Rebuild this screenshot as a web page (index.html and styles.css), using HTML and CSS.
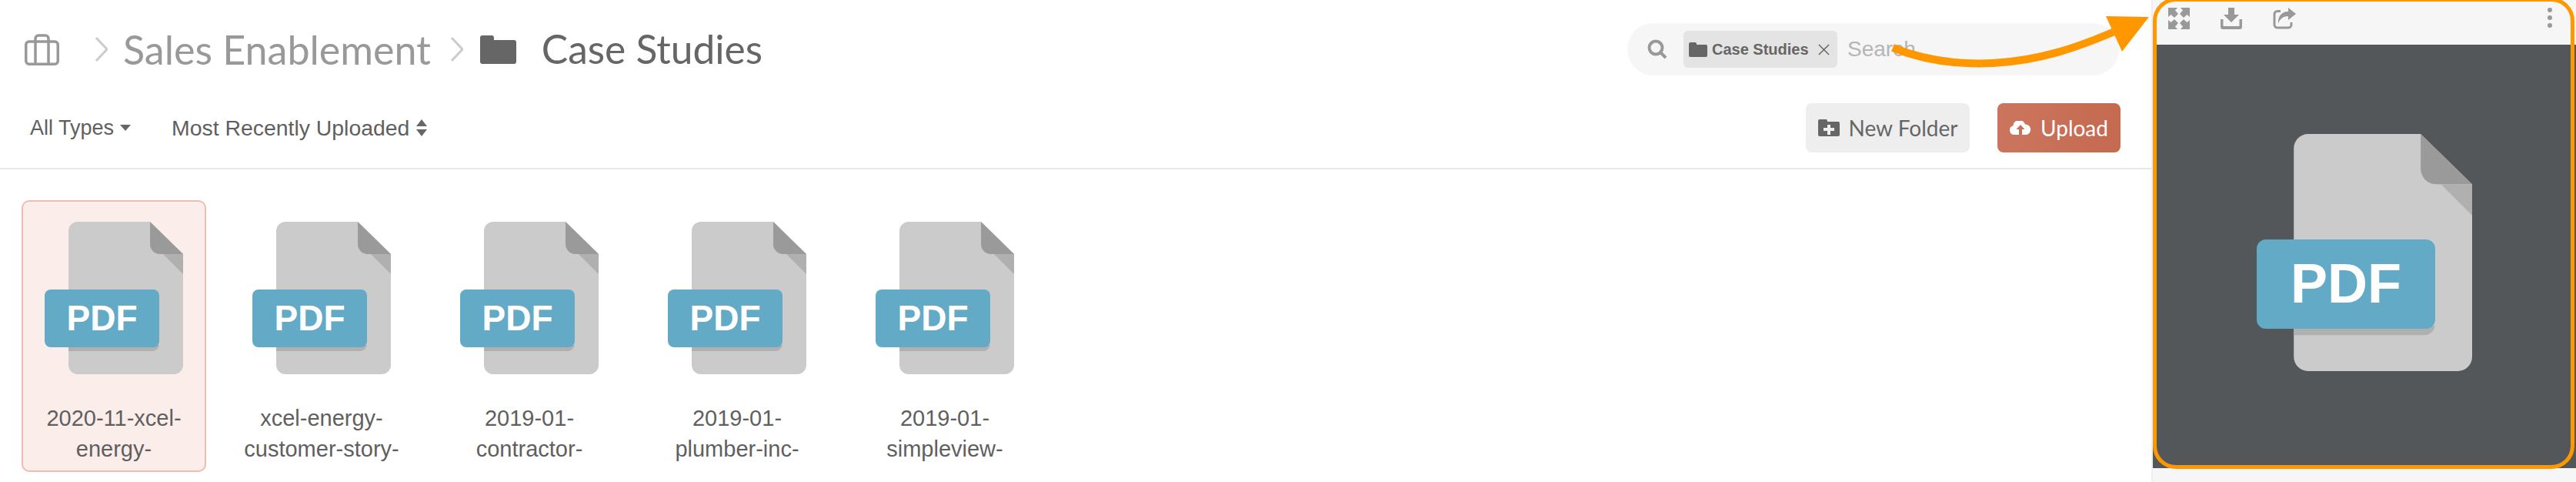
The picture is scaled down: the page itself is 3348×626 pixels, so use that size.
FILE: index.html
```html
<!DOCTYPE html>
<html lang="en">
<head>
<meta charset="utf-8">
<title>Case Studies</title>
<link rel="stylesheet" href="styles.css">
</head>
<body>
<svg class="defs" width="0" height="0" aria-hidden="true">
  <defs>
    <symbol id="pdf-file" viewBox="0 0 180 198">
      <path d="M31 12A12 12 0 0 1 43 0H137L180 42V186a12 12 0 0 1-12 12H43a12 12 0 0 1-12-12Z" fill="#cbcbcb"/>
      <path d="M137 0L180 42H150a13 13 0 0 1-13-13Z" fill="#9a9a9a"/>
      <path d="M154 42H180V68Z" fill="#b0b0b0"/>
      <path d="M31 160H149V159a9 9 0 0 1-9 9H31Z" fill="#b0b0b0"/>
    </symbol>
  </defs>
</svg>
<div class="page">
  <main class="browser">
    <header class="crumbs">
      <svg class="briefcase" viewBox="0 0 45 41" fill="none" stroke="#999" stroke-width="3.5"><rect x="1.750" y="10" width="41.500" height="29.250" rx="4"/><path d="M14 10V6a4 4 0 0 1 4-4h9a4 4 0 0 1 4 4v4M14 10V39M31 10V39"/></svg>
      <svg class="chev" viewBox="0 0 16 32" fill="none" stroke="#ccc" stroke-width="3"><path d="M1 1L15 16L1 31"/></svg>
      <span class="crumb">Sales Enablement</span>
      <svg class="chev chev-b" viewBox="0 0 16 32" fill="none" stroke="#ccc" stroke-width="3"><path d="M1 1L15 16L1 31"/></svg>
      <svg class="folder" viewBox="0 0 47 37" fill="#666"><path d="M0 3a3 3 0 0 1 3-3h12a3 3 0 0 1 3 3v3h26a3 3 0 0 1 3 3v25a3 3 0 0 1-3 3H3a3 3 0 0 1-3-3Z"/></svg>
      <span class="crumb crumb-now">Case Studies</span>
      <div class="search">
        <svg class="mag" viewBox="0 0 26 26" fill="none" stroke="#999" stroke-width="4"><circle cx="11" cy="11" r="8.500"/><path d="M17 17L24 24"/></svg>
        <span class="tag">
          <svg class="tag-folder" viewBox="0 0 24 19" fill="#666"><path d="M0 2a2 2 0 0 1 2-2h6a2 2 0 0 1 2 2v1h12a2 2 0 0 1 2 2v12a2 2 0 0 1-2 2H2a2 2 0 0 1-2-2Z"/></svg>
          <b class="tag-text">Case Studies</b>
          <svg class="tag-x" viewBox="0 0 16 16" stroke="#666" stroke-width="1.600"><path d="M1 1L15 15M15 1L1 15"/></svg>
        </span>
        <span class="placeholder">Search</span>
      </div>
    </header>
    <div class="tools">
      <span class="filter filter-type">All Types</span>
      <svg class="caret" viewBox="0 0 14 8" fill="#666"><path d="M0 0H14L7 8Z"/></svg>
      <span class="filter filter-sort">Most Recently Uploaded</span>
      <svg class="sort" viewBox="0 0 14 24" fill="#666"><path d="M0 10L7 1L14 10ZM0 14H14L7 23Z"/></svg>
      <button class="btn btn-new">
        <svg class="btn-icon" viewBox="0 0 28 22" fill="#666"><path d="M0 2a2 2 0 0 1 2-2h8a2 2 0 0 1 2 2v1h14a2 2 0 0 1 2 2v15a2 2 0 0 1-2 2H2a2 2 0 0 1-2-2Z"/><path d="M12 7h4v4h5v4h-5v5h-4v-5H7v-4h5Z" fill="#eee"/></svg>
        New Folder
      </button>
      <button class="btn btn-up">
        <svg class="btn-icon" viewBox="0 0 28 18"><path d="M6 18a6 6 0 0 1-1.500-11.800A8 8 0 0 1 20 4.500a6.800 6.800 0 0 1 1.500 13.500Z" fill="#fff"/><path d="M14 5l5.500 6H16v7h-4v-7H8.500Z" fill="#c9705a"/></svg>
        Upload
      </button>
    </div>
    <section class="grid">
      <article class="item item-on">
        <div class="thumb"><svg class="doc"><use href="#pdf-file"/></svg><span class="badge">PDF</span></div>
        <p class="name">2020-11-xcel-<br>energy-</p>
      </article>
      <article class="item">
        <div class="thumb"><svg class="doc"><use href="#pdf-file"/></svg><span class="badge">PDF</span></div>
        <p class="name">xcel-energy-<br>customer-story-</p>
      </article>
      <article class="item">
        <div class="thumb"><svg class="doc"><use href="#pdf-file"/></svg><span class="badge">PDF</span></div>
        <p class="name">2019-01-<br>contractor-</p>
      </article>
      <article class="item">
        <div class="thumb"><svg class="doc"><use href="#pdf-file"/></svg><span class="badge">PDF</span></div>
        <p class="name">2019-01-<br>plumber-inc-</p>
      </article>
      <article class="item">
        <div class="thumb"><svg class="doc"><use href="#pdf-file"/></svg><span class="badge">PDF</span></div>
        <p class="name">2019-01-<br>simpleview-</p>
      </article>
    </section>
  </main>
  <aside class="preview">
    <div class="bar">
      <svg class="tool" viewBox="0 0 28 28" fill="#999"><path d="M0 0H12L9 3.500L13 8L8 13L3.500 9L0 12ZM28 0V12L24.500 9L20 13L15 8L19 3.500L16 0ZM0 28V16L3.500 19L8 15L13 20L9 24.500L12 28ZM28 28H16L19 24.500L15 20L20 15L24.500 19L28 16Z"/></svg>
      <svg class="tool" viewBox="0 0 28 28" fill="#999"><path d="M10 0H18V9H24L14 19L4 9H10Z"/><path d="M0 15H3.500V24H24.500V15H28V25a3 3 0 0 1-3 3H3a3 3 0 0 1-3-3Z"/></svg>
      <svg class="tool tool-share" viewBox="0 0 30 28"><path d="M10 4.500H6a4 4 0 0 0-4 4V22a4 4 0 0 0 4 4H20a4 4 0 0 0 4-4V19" fill="none" stroke="#999" stroke-width="3"/><path d="M20 0L30 8L20 16V11C14 11 9 14 7 21C6 11 12 5 20 5Z" fill="#999"/></svg>
      <span class="dots"><i></i><i></i><i></i></span>
    </div>
    <div class="stage">
      <div class="big-thumb"><svg class="doc"><use href="#pdf-file"/></svg><span class="badge big-badge">PDF</span></div>
    </div>
    <div class="foot"></div>
  </aside>
</div>
<div class="ring"></div>
<svg class="arrow" viewBox="0 0 3348 626" aria-hidden="true">
  <path d="M2460 62C2505 80 2550 84 2590 82C2650 79 2700 62 2755 38" fill="none" stroke="#ff9800" stroke-width="10"/>
  <path d="M2737 21L2793 22L2758 67Z" fill="#ff9800"/>
</svg>
</body>
</html>
```
FILE: styles.css
```css
* { box-sizing: border-box; }
html, body { margin: 0; height: 626px; overflow: hidden; background: #fff; }
body { position: relative; font-family: "Liberation Sans", Arial, sans-serif; color: #5f5f5f; }
.defs { position: absolute; }
.page { display: flex; height: 626px; }
.browser { width: 2796px; flex: none; overflow: hidden; }

.crumbs { display: flex; align-items: center; height: 128px; padding: 0 42px 0 32px; }
.briefcase { width: 45px; height: 41px; margin-right: 47px; }
.chev { width: 16px; height: 32px; margin-right: 20px; }
.chev-b { margin: 0 22px 0 26px; }
.crumb { font: 400 52px/1 Lato, sans-serif; color: #999; }
.folder { width: 47px; height: 37px; margin-right: 33px; }
.crumb-now { color: #666; font-size: 51.5px; }

.search { margin-left: auto; width: 639px; height: 68px; border-radius: 34px; background: #f6f6f6; display: flex; align-items: center; padding-left: 26px; }
.mag { width: 26px; height: 26px; margin-right: 21px; }
.tag { display: flex; align-items: center; width: 200px; height: 48px; padding-left: 7px; background: #e4e4e4; border-radius: 6px; }
.tag-folder { width: 24px; height: 19px; margin-right: 6px; }
.tag-text { font-size: 20px; font-weight: 700; line-height: 1; color: #666; }
.tag-x { width: 15px; height: 15px; margin-left: 12px; }
.placeholder { margin-left: 13px; font-size: 28px; line-height: 1; color: #b5b5b5; }

.tools { display: flex; align-items: center; height: 92px; padding: 0 40px 14px 39px; border-bottom: 2px solid #e8e8e8; }
.filter { font-size: 28.4px; }
.filter-type { font-size: 27px; }
.caret { width: 14px; height: 8px; margin-left: 8px; }
.filter-sort { margin-left: 53px; }
.sort { width: 14px; height: 24px; margin-left: 9px; }
.btn { display: flex; align-items: center; justify-content: center; gap: 12px; height: 64px; border: 0; border-radius: 8px; font: 400 28px/1 Lato, sans-serif; }
.btn-new { width: 213px; margin-left: auto; background: #eee; color: #666; }
.btn-up { width: 160px; margin-left: 36px; background: linear-gradient(90deg, #cc755e, #c46a50); color: #fff; }
.btn-icon { width: 28px; height: 22px; flex: none; }
.btn-up .btn-icon { height: 18px; }

.grid { display: flex; gap: 30px; padding: 40px 28px 0; }
.item { flex: none; width: 240px; height: 353px; padding: 26px 28px 0; border: 2px solid transparent; border-radius: 10px; text-align: center; }
.item-on { background: #fbede9; border-color: #eebdaf; }
.thumb { position: relative; width: 180px; height: 198px; }
.doc { display: block; width: 100%; height: 100%; }
.badge { position: absolute; left: 0; top: 88px; width: 149px; height: 75px; border-radius: 8px; background: #63aac6; color: #fff; font-weight: 700; font-size: 46px; line-height: 74px; text-align: center; }
.name { margin: 37px -28px 0; font-size: 29px; line-height: 40px; color: #5f5f5f; }

.preview { flex: none; width: 552px; height: 626px; display: flex; flex-direction: column; border-left: 2px solid #eee; }
.bar { height: 58px; flex: none; display: flex; align-items: flex-start; gap: 40px; padding: 10px 0 0 20px; background: #f6f6f6; }
.tool { width: 28px; height: 28px; flex: none; }
.tool-share { width: 30px; }
.dots { margin-left: auto; margin-right: 31px; display: flex; flex-direction: column; gap: 4px; }
.dots i { display: block; width: 6px; height: 6px; border-radius: 50%; background: #999; }
.stage { height: 550px; flex: none; display: flex; justify-content: center; padding: 116px 0 0 0; background: #54575a; }
.big-thumb { position: relative; width: 280px; height: 308px; }
.big-badge { top: 137px; width: 232px; height: 116px; border-radius: 12px; font-size: 72px; line-height: 114px; }
.foot { flex: 1; background: #f6f6f6; }

.ring { position: absolute; left: 2798px; top: -3px; width: 548px; height: 612px; border: 5px solid #ff9800; border-radius: 30px; }
.arrow { position: absolute; left: 0; top: 0; width: 3348px; height: 626px; pointer-events: none; }
```
